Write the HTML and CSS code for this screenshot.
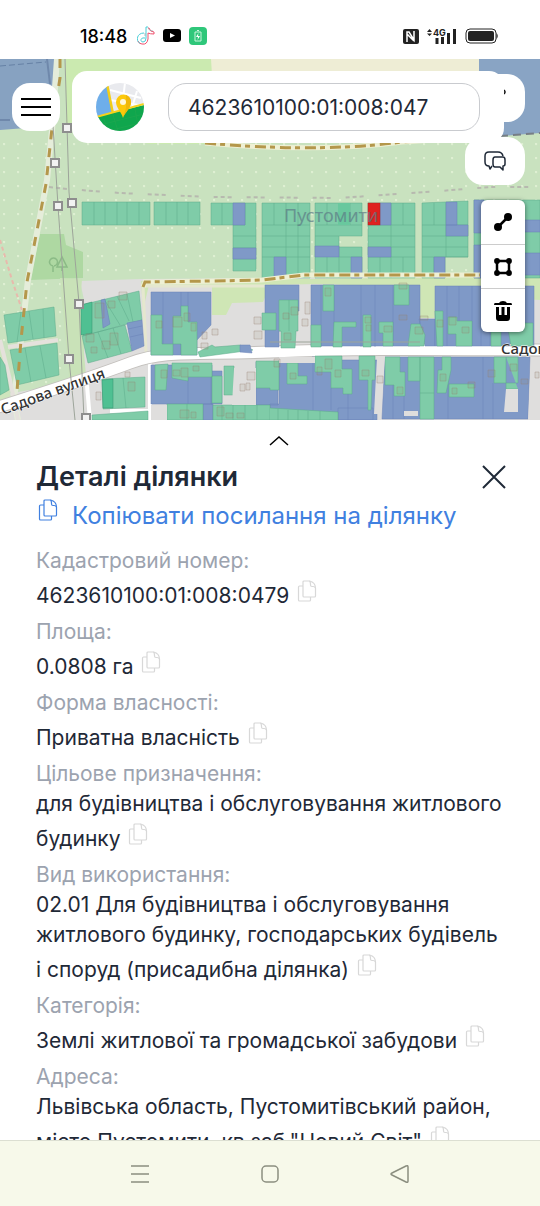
FILE: index.html
```
<!DOCTYPE html>
<html lang="uk">
<head>
    <meta charset="UTF-8">
    <meta name="viewport" content="width=device-width, initial-scale=1.0">
    <title>Деталі ділянки</title>
    <link rel="stylesheet" href="styles.css">
</head>
<body>
    <svg class="sprite" aria-hidden="true">
        <symbol id="copy" viewBox="0 0 24 24">
            <path d="M8 7H4.5Q3.500 7 3.500 8V21Q3.500 22 4.500 22H14.500Q15.500 22 15.500 21V18"/>
            <path d="M9 2H14.500Q20.500 3.500 20.500 9V17Q20.500 18 19.500 18H9Q8 18 8 17V3Q8 2 9 2Z"/>
            <path d="M14.500 2Q15.500 3 15.500 5V6Q15.500 7.500 17 7.500H18Q20 7.500 20.500 9"/>
        </symbol>
    </svg>

    <header class="status-bar">
        <div class="status-left">
            <span class="clock">18:48</span>
            <svg width="18" height="20" viewBox="0 0 18 20" fill="none">
                <path d="M11 2H12Q13 6 17 6V8Q13 8 11 7V13Q10 19 5 18Q2 18 1 15" stroke="#f0506e"/>
                <path d="M7 7C-1 7-1 16 3 17M8 12C3 11 3 16 6 16Q9 16 9 12V1H11" stroke="#48cdd6"/>
                <path d="M8 7V10M11 2Q12 5 16 5" stroke="#9aa5aa" stroke-width=".7"/>
            </svg>
            <svg width="18" height="14" viewBox="0 0 18 14"><rect width="18" height="13" rx="3"/><path d="M7 4L12 6.500L7 9Z" fill="#fff"/></svg>
            <svg width="18" height="18" viewBox="0 0 18 18"><rect width="18" height="18" rx="4" fill="#2fc77a"/><path d="M6 5H12V14H6ZM8 3.500H10" fill="none" stroke="#c9f5dc"/><path d="M9.500 6L7 10H9L8.500 13L11 9H9Z" fill="#fff"/></svg>
        </div>
        <div class="status-right">
            <svg width="16" height="15" viewBox="0 0 16 15"><rect width="16" height="15" rx="2" fill="#222"/><path d="M4 13V3L6 3L11 11V2M4 5L11 12" fill="none" stroke="#fff" stroke-width="1.5"/></svg>
            <svg width="30" height="16" viewBox="0 0 30 16" fill="#222">
                <path d="M0 4L2.500 1L5 4ZM0 5.500H5L2.500 8ZM8.500 10H11.500V16H8.500ZM14 9H17V16H14ZM20 5H23V16H20ZM26 1H29V16H26Z"/>
                <text class="network" x="6" y="8">4G</text>
            </svg>
            <svg width="33" height="16" viewBox="0 0 33 16"><rect x="1" y="1" width="30" height="14" rx="4" fill="none" stroke="#222"/><rect x="3" y="3" width="26" height="10" rx="2" fill="#222"/><path d="M31.500 5Q34 8 31.500 11Z" fill="#222"/></svg>
        </div>
    </header>

    <main class="app">
        <section class="map">
            <svg class="map-canvas" viewBox="0 59 540 361" role="img" aria-label="Кадастрова карта">
                <defs>
                    <pattern id="dots" x="3" y="143" width="14" height="14" patternUnits="userSpaceOnUse"><circle cx="1" cy="1" r="1.200" fill="#dff0d3"/></pattern>
                </defs>

                <!-- land use -->
                <rect y="59" width="540" height="361" fill="#c9e2bf"/>
                <path d="M66 59H212L216 100V144H150L66 130Z" fill="#cbeab0"/>
                <path d="M211 59H480V136L400 143H216Z" fill="#eeedd5"/>
                <path d="M479 59H540V133L500 136L479 140Z" fill="#89a4c4"/>
                <path d="M0 59H58L52 126L0 130Z" fill="#87a2c1"/>
                <path d="M0 66L46 62" fill="none" stroke="#6681a5" stroke-dasharray="6 3"/>
                <path d="M47 59L50 84M0 120H10" fill="none" stroke="#6f88ab" stroke-width="2"/>
                <rect y="132" width="540" height="285" fill="url(#dots)"/>
                <path d="M40 234H64L66 245L83 252V278L30 280Z" fill="#aed8a2"/>
                <path d="M53 272V266M53 266A4 4 0 1 1 54 266M62 271V267M57 267H67L62 257Z" fill="none" stroke="#8bbb86" stroke-width="1.500"/>
                <path d="M80 281L141 279L540 276V420H0V395L60 385L84 365V300Z" fill="#dfdedd"/>
                <path d="M141 281L540 276V300L435 294V318H420V287L315 284L270 285L263 302L232 303L226 315H212V285H149L143 310Z" fill="#cfe6b5"/>
                <path d="M60 278L70 387L86 376L80 305L82 279Z" fill="#c9e2b8"/>
                <path d="M0 340L12 404L0 408Z" fill="#cfe5bd"/>

                <!-- roads -->
                <path d="M57 59L52 130L47 180L28 280L14 400L18 420" fill="none" stroke="#e5edda" stroke-width="6"/>
                <path d="M143 286L146 352M143 286H270" fill="none" stroke="#e5e7cf" stroke-width="3"/>
                <path d="M86 374L90 420M150 360V420M110 411H149" fill="none" stroke="#fff" stroke-width="4"/>
                <path d="M0 340L10 380L18 420M8 347L58 340" fill="none" stroke="#e5e1dc" stroke-width="4"/>
                <path d="M-5 408C40 394 90 378 130 363C165 350 195 355 270 352S400 349 545 350" fill="none" stroke="#c3c0bd" stroke-width="13"/>
                <path d="M-5 408C40 394 90 378 130 363C165 350 195 355 270 352S400 349 545 350" fill="none" stroke="#fff" stroke-width="11"/>

                <!-- parcels, northern rows -->
                <g class="free">
                    <path d="M82 202H150V225H82ZM154 202H200V225H154ZM211 203H256V271H233V225H211Z"/>
                    <path d="M262 203H310V278H262ZM315 203H362V236H339V247H362V278H315ZM368 203H415V278H368ZM422 203L468 201V257H445V278H422ZM474 200H540V278H474Z"/>
                    <path d="M94 202V225M105 202V225M117 202V225M127 202V225M139 202V225M166 202V225M177 202V225M188 202V225M222 203V225M245 203V225H233M233 236H256M233 248H256M233 259H256"/>
                    <path d="M262 225H310M262 236H310M262 247H310M262 257H310M274 203V225M286 203V278M298 203V278M315 225H362M315 236H339M315 247H339V257H362M327 203V225M339 203V225M350 203V225M327 257V278M339 257V278"/>
                    <path d="M368 225H415M368 236H415M368 247H415M368 257H415M391 203V278M403 203V225M380 257V278M403 257V278M422 225H468M422 236H468M422 247H468M422 257H468M434 203V225M446 203V257M434 257V278"/>
                </g>
                <g class="owned">
                    <path d="M233 203H245V225H233ZM233 248H256V259H233ZM274 257H286V278H274ZM315 246H339V257H315ZM351 257H362V278H351ZM380 203H391V225H380ZM368 247H391V257H368ZM446 202H457V225H446ZM446 225H468V236H446ZM434 257H445V278H434Z"/>
                    <path d="M474 200H484V233H474ZM474 245H484V278H474ZM520 220H540V232H520ZM520 253H540V275H520Z"/>
                </g>
                <rect x="338" y="203" width="12" height="22" fill="#69c89e"/>
                <rect x="368" y="203" width="12" height="22" fill="#df211f" stroke="#a62a24" stroke-width=".5"/>

                <!-- parcels, west side -->
                <g class="free">
                    <path d="M4 315L54 307L56 336L8 343ZM10 350L57 343L59 375L17 385ZM0 357L5 365L9 390L0 395Z"/>
                    <path d="M21 312L17 342M29 311L33 339M43 309L44 338M25 348L31 382M40 346L46 378"/>
                    <path d="M81 305L139 291L142 320L83 336ZM82 336L125 325L132 351L88 363ZM104 299L120 325M117 296L129 321M127 294L133 322M98 332L108 358M113 328L121 354"/>
                    <path d="M102 379L145 377V407L103 409ZM123 378L126 408M92 415L148 411V420H92Z"/>
                </g>
                <path class="bright" d="M81 305L92 302V333L81 335ZM102 380L113 379V408H103Z"/>
                <path class="owned" d="M101 300L105 299L110 324L103 328ZM127 323L142 320L144 346L132 351ZM128 329L142 326M130 337L143 334"/>

                <!-- parcels along the street, north side -->
                <g class="owned">
                    <path d="M151 292H211V325L197 340V355H151ZM163 292V354M181 292V355M188 292V320"/>
                    <path d="M265 285H299V311H296V331H279V347H265ZM311 285H420V346H311ZM321 285V347M334 285V347M361 285V347M375 285V347M393 285V346M419 319H435V346H425Z"/>
                    <path d="M435 286H534V346H435ZM447 286V346M459 286V346M472 286V346M481 286V346M490 331V346"/>
                </g>
                <g class="free">
                    <path d="M151 315H162V344H173V355H151ZM173 316H181V306H188V322H197V355H181V344H173ZM198 352L212 345L215 347L240 345L253 350L200 357Z"/>
                    <path d="M262 313H276V330H262ZM279 300H298V331H296L295 348H281V331H279ZM289 300V331M323 285H334V311H323ZM311 325H321V347H311ZM334 322H356V327H342V347H333ZM363 315H371V347H363ZM379 322H393V346H383V333H379ZM394 285H409V305H394ZM411 324H420L425 335L424 346H408Z"/>
                    <path d="M435 311H443V346H437ZM448 317H457V321H472V346H456V334H448ZM491 332H501V346H491ZM507 323H533V346H511Z"/>
                </g>
                <path class="owned" d="M240 345H250L252 353L240 352Z"/>

                <!-- parcels along the street, south side -->
                <g class="owned">
                    <path d="M151 365H212V404H151ZM188 378V404M211 371H222V404H211ZM256 362H278V405H256ZM279 360H377V420H270V404H279ZM385 357H530L528 419H382ZM203 404H213V420H203ZM338 408H373V420H338Z"/>
                    <path d="M313 356V410M331 388V410M348 394V420M393 385V419M404 383V419M448 357V419M483 357V419M493 383V419"/>
                </g>
                <g class="free">
                    <path d="M155 365L168 364L166 390H155ZM172 363H212V377H188V381L172 378ZM212 376H222V403H212ZM224 366H234V395H224ZM167 404H203V420H167ZM213 405H270V420H213ZM187 404V420M222 405V420M233 405V420M245 405V420M257 405V420"/>
                    <path d="M256 361H279V390H270V388H256ZM287 363H298V376H307V384H287ZM315 356H342V369H352V394H343V388H331V372H315ZM359 356H375V380H372L371 410H368V380H359ZM385 357H400V372H405V396H394V385H385ZM408 357H420V381H408ZM420 357H434V419H420ZM438 370H442V357H451V370L446 393H437ZM449 384H474V397H449ZM494 357H518V383H494ZM506 357V389H518M270 408L338 412V420H270M420 393H434M278 409V420M288 410V420M298 410V420M308 411V420M320 411V420"/>
                </g>
                <path d="M377 357H385L381 414H374ZM506 389H518V412H504ZM151 405H167V420H151ZM234 368H256V405H232ZM404 411H418V416H404ZM531 357H540V420H528ZM279 357H315V363H279Z" fill="#dfdedd"/>

                <!-- buildings -->
                <g class="buildings">
                    <path d="M108 301h7v7h-7zM119 292h8v8h-8zM95 303h9v15h-9zM86 334h8v8h-8zM102 341h8v8h-8zM110 333h8v12h-8zM91 347h6v6h-6zM156 321h6v7h-6zM173 317h9v10h-9zM184 313h6v8h-6zM191 323h5v8h-5zM202 332h5v7h-5zM212 329h6v6h-6zM201 343h7v6h-7zM254 317h7v7h-7zM254 331h8v8h-8z"/>
                    <path d="M128 382h7v9h-7zM96 392h5v8h-5zM125 372h5v5h-5zM161 370h6v8h-6zM173 370h7v6h-7zM181 368h7v9h-7zM193 366h6v5h-6zM247 372h8v8h-8zM240 384h5v7h-5zM246 383h4v7h-4zM180 410h9v8h-9zM191 412h5v6h-5zM217 407h7v9h-7zM226 413h7v5h-7zM237 413h7v5h-7z"/>
                    <path d="M283 313h6v6h-6zM291 307h7v8h-7zM305 302h5v12h-5zM302 319h6v7h-6zM284 333h7v7h-7zM325 288h6v8h-6zM365 317h6v6h-6zM366 325h5v6h-5zM384 326h8v6h-8zM399 283h8v6h-8zM399 315h8v5h-8zM415 327h8v7h-8zM420 316h8v4h-8zM437 320h6v7h-6zM449 317h7v8h-7zM462 327h7v6h-7z"/>
                    <path d="M290 373h6v6h-6zM274 359h6v8h-6zM317 367h5v8h-5zM325 359h7v10h-7zM335 370h6v7h-6zM362 370h7v6h-7zM377 376h6v7h-6zM397 387h6v7h-6zM440 374h6v7h-6zM452 388h5v6h-5zM468 382h7v6h-7zM488 370h7v7h-7zM510 364h7v7h-7zM521 379h7v5h-7zM535 372h4v6h-4z"/>
                </g>

                <!-- paths and power lines -->
                <g class="track-edge">
                    <path d="M143 287L145 282Q220 281 262 280L304 275H480"/>
                    <path d="M205 143Q320 153 402 142L480 137"/>
                </g>
                <path class="track-steep" d="M60 59V78L52 128L46 184L27 282L21 340L17 391"/>
                <g class="track">
                    <path d="M143 287L145 282Q220 281 262 280L304 275H480"/>
                    <path d="M205 143Q320 153 402 142L480 137"/>
                </g>
                <path d="M49 187L67 189L120 193L210 197L340 198L440 191L490 187H540" class="footway"/>
                <path d="M0 240L12 280L22 310" class="trail"/>
                <path d="M65 59L69 192L79 303L84 420M53 126L58 206L69 359L75 420M270 342H420" class="wire"/>
                <path d="M500 136L540 133" fill="none" stroke="#777e86" stroke-width="2" stroke-dasharray="8 5"/>
                <path class="pylons" d="M63 124h8v8h-8zM51 159h8v8h-8zM54 202h8v8h-8zM68 199h8v8h-8zM75 300h8v8h-8zM65 355h8v8h-8zM82 414h8v8h-8z"/>

                <!-- place names -->
                <text class="place" x="284" y="222">Пустомити</text>
                <text class="street" transform="translate(3 415) rotate(-20)">Садова вулиця</text>
                <text class="street" x="501" y="354">Садова</text>
            </svg>

            <button class="map-button menu-button" aria-label="Меню">
                <svg width="30" height="20" viewBox="0 0 30 20"><path d="M0 2H30M0 10H30M0 18H30" stroke="#000" stroke-width="2"/></svg>
            </button>
            <button class="map-button user-button" aria-label="Профіль">
                <svg width="12" height="10" viewBox="0 0 12 10"><path d="M9 1Q11 3 9 5" fill="none" stroke="#111" stroke-width="1.500"/></svg>
            </button>
            <form class="search-bar">
                <svg class="logo" viewBox="0 0 48 48">
                    <clipPath id="round"><circle cx="24" cy="24" r="24"/></clipPath>
                    <g clip-path="url(#round)">
                        <rect width="48" height="48" fill="#e9eaee"/>
                        <path d="M14 7L45 15M14 17L48 23M29 0L26 24M41 8L35 28" stroke="#fff" stroke-width="2"/>
                        <path d="M0 0H11L17 31L0 36Z" fill="#6eaeea"/>
                        <path d="M11 1L17 31" stroke="#f2cd18" stroke-width="2.500"/>
                        <path d="M0 34L48 22V48H0Z" fill="#0fa64d"/>
                        <path d="M0 34L48 21" stroke="#f5d21c" stroke-width="2"/>
                        <path d="M8 36L12 48M17 32L22 48M39 26L43 48M0 43L48 31M12 48L48 39" stroke="#26a851" stroke-width=".5"/>
                        <path d="M27 35C25 28 20 25 20 19A7 7 0 0 1 35 19C35 25 29 29 27 35Z" fill="#fdc90b"/>
                        <path d="M27 35C29 29 35 25 35 19Q35 14 30 12V25Z" fill="#f0b80b"/>
                        <circle cx="27" cy="19" r="3" fill="#fff7db"/>
                    </g>
                </svg>
                <input type="text" class="search-input" value="4623610100:01:008:047" aria-label="Кадастровий номер">
            </form>
            <button class="map-button chat-button" aria-label="Чат">
                <svg width="24" height="24" viewBox="0 0 24 24" fill="none" stroke="#1f2937" stroke-width="1.500" stroke-linejoin="round">
                    <path d="M9 17L7 20L6 17Q2 17 2 13V7Q2 3 6 3H15Q19 3 20 7"/>
                    <path d="M12 8H20Q22 8 22 11V15Q22 17 20 17V21L17 18H12Q10 18 10 15V11Q10 8 12 8Z"/>
                </svg>
            </button>
            <div class="draw-tools">
                <button aria-label="Лінія">
                    <svg width="20" height="20" viewBox="0 0 20 20"><path d="M4 16L16 4" stroke="#000" stroke-width="2.500"/><circle cx="5" cy="15" r="4"/><circle cx="15" cy="5" r="4"/></svg>
                </button>
                <button aria-label="Полігон">
                    <svg width="20" height="20" viewBox="0 0 20 20"><rect x="4" y="4" width="12" height="12" fill="none" stroke="#000" stroke-width="2.500"/><circle cx="4" cy="4" r="2.900"/><circle cx="16" cy="4" r="2.900"/><circle cx="4" cy="16" r="2.900"/><circle cx="16" cy="16" r="2.900"/></svg>
                </button>
                <button aria-label="Видалити">
                    <svg width="20" height="22" viewBox="0 0 20 22"><path d="M2 3H6Q7 1 10 1Q13 1 14 3H18Q19 3 19 5H1Q1 3 2 3Z"/><path d="M3 7H6V15H8.500V7H11.500V15H14V7H17V18Q17 21 14 21H6Q3 21 3 18Z"/></svg>
                </button>
            </div>
        </section>

        <section class="details">
            <button class="expand-button" aria-label="Розгорнути">
                <svg width="20" height="11" viewBox="0 0 20 11"><path d="M1 10L10 2L19 10" fill="none" stroke="#000" stroke-width="1.500"/></svg>
            </button>
            <div class="details-header">
                <h1>Деталі ділянки</h1>
                <button class="close-button" aria-label="Закрити">
                    <svg width="24" height="24" viewBox="0 0 24 24"><path d="M1 1L23 23M23 1L1 23" stroke="#1f2937" stroke-width="2"/></svg>
                </button>
            </div>
            <a href="#" class="copy-link">
                <svg class="copy-icon"><use href="#copy"/></svg>
                <span>Копіювати посилання на ділянку</span>
            </a>
            <dl class="fields">
                <dt>Кадастровий номер:</dt>
                <dd>4623610100:01:008:0479 <button class="copy-button" aria-label="Копіювати"><svg class="copy-icon"><use href="#copy"/></svg></button></dd>
                <dt>Площа:</dt>
                <dd>0.0808 га <button class="copy-button" aria-label="Копіювати"><svg class="copy-icon"><use href="#copy"/></svg></button></dd>
                <dt>Форма власності:</dt>
                <dd>Приватна власність <button class="copy-button" aria-label="Копіювати"><svg class="copy-icon"><use href="#copy"/></svg></button></dd>
                <dt>Цільове призначення:</dt>
                <dd>для будівництва і обслуговування житлового будинку <button class="copy-button" aria-label="Копіювати"><svg class="copy-icon"><use href="#copy"/></svg></button></dd>
                <dt>Вид використання:</dt>
                <dd>02.01 Для будівництва і обслуговування житлового будинку, господарських будівель і&nbsp;споруд (присадибна ділянка) <button class="copy-button" aria-label="Копіювати"><svg class="copy-icon"><use href="#copy"/></svg></button></dd>
                <dt>Категорія:</dt>
                <dd>Землі житлової та громадської забудови <button class="copy-button" aria-label="Копіювати"><svg class="copy-icon"><use href="#copy"/></svg></button></dd>
                <dt>Адреса:</dt>
                <dd>Львівська область, Пустомитівський район, місто Пустомити, кв.заб."Новий Світ" <button class="copy-button" aria-label="Копіювати"><svg class="copy-icon"><use href="#copy"/></svg></button></dd>
            </dl>
        </section>
    </main>

    <nav class="system-nav">
        <button aria-label="Останні програми"><svg width="20" height="20" viewBox="0 0 20 20"><path d="M1 2H19M1 10H19M1 18H19"/></svg></button>
        <button aria-label="Головний екран"><svg width="20" height="20" viewBox="0 0 20 20"><rect x="2" y="2" width="16" height="16" rx="4"/></svg></button>
        <button aria-label="Назад"><svg width="20" height="20" viewBox="0 0 20 20"><path d="M2 9L16 2Q18 1 18 3V17Q18 19 16 18L2 11Q0 10 2 9Z"/></svg></button>
    </nav>
</body>
</html>
```

FILE: styles.css
```
* {
    box-sizing: border-box;
}
body {
    font-family: Inter, "Noto Sans", sans-serif;
    margin: 0;
    height: 100vh;
    display: flex;
    flex-direction: column;
    overflow: hidden;
    background-color: #fff;
    color: #1f2937;
}
button {
    border: none;
    padding: 0;
    background: none;
    font: inherit;
    color: inherit;
    cursor: pointer;
}
svg {
    display: block;
}
.sprite {
    position: absolute;
    width: 0;
    height: 0;
}

/* status bar */
.status-bar {
    flex: none;
    display: flex;
    justify-content: space-between;
    padding: 24px 42px 11px 80px;
}
.status-left,
.status-right {
    display: flex;
    align-items: center;
    gap: 8px;
    height: 24px;
}
.clock {
    font-size: 18px;
    font-weight: 500;
    color: #000;
    margin-right: 2px;
}
.network {
    font-size: 9px;
    font-weight: 700;
}

.app {
    flex: 1;
    min-height: 0;
    display: flex;
    flex-direction: column;
}

/* map */
.map {
    position: relative;
    flex: none;
}
.map-canvas {
    width: 100%;
    height: auto;
}
.free {
    fill: #7fcca8;
    stroke: #5dab8b;
    stroke-width: 0.5;
}
.owned {
    fill: #7f99c7;
    stroke: #6880b6;
    stroke-width: 0.5;
}
.bright {
    fill: #4fc092;
    stroke: #36906f;
    stroke-width: 0.5;
}
.buildings {
    fill: rgba(150, 130, 110, 0.12);
    stroke: rgba(150, 125, 110, 0.35);
}
.track,
.track-steep,
.track-edge {
    fill: none;
    stroke: #b4974b;
    stroke-width: 3;
    stroke-dasharray: 11 4 5 5;
}
.track-steep {
    stroke-dasharray: 9 9;
}
.track-edge {
    stroke: #eef0d4;
    stroke-width: 5;
    stroke-dasharray: none;
}
.footway {
    fill: none;
    stroke: #b7b9af;
    stroke-width: 2;
    stroke-dasharray: 4 3 4 3 4 15;
}
.trail {
    fill: none;
    stroke: #e8b9ac;
    stroke-width: 2;
    stroke-dasharray: 4 3;
}
.wire {
    fill: none;
    stroke: #9da49a;
    stroke-width: 1;
}
.pylons {
    fill: #f2f2f2;
    stroke: #8e8e8e;
    stroke-width: 2;
}
.place {
    font-family: "Noto Sans", sans-serif;
    font-size: 18px;
    fill: #5d7c86;
    opacity: 0.7;
}
.street {
    font-family: "Noto Sans", sans-serif;
    font-size: 15px;
    font-weight: 500;
    fill: #333;
    stroke: #fff;
    stroke-width: 1;
    paint-order: stroke;
}
.map-button {
    position: absolute;
    display: flex;
    align-items: center;
    justify-content: center;
    height: 48px;
    background-color: #fff;
    border-radius: 18px;
}
.menu-button {
    top: 24px;
    left: 12px;
    width: 48px;
}
/* sits partly under the search bar */
.user-button {
    top: 15px;
    right: 15px;
    width: 48px;
    padding-bottom: 8px;
}
.search-bar {
    position: absolute;
    top: 12px;
    left: 72px;
    right: 36px;
    display: flex;
    align-items: center;
    gap: 24px;
    padding: 12px 24px;
    background-color: #fff;
    border-radius: 15px;
}
.logo {
    flex: none;
    width: 48px;
    height: 48px;
}
.search-input {
    flex: 1;
    min-width: 0;
    height: 48px;
    padding: 0 19px;
    border: 1px solid #c9cbcf;
    border-radius: 18px;
    background-color: #fff;
    font-family: inherit;
    font-size: 21px;
    color: #1f2937;
}
.chat-button {
    top: 78px;
    right: 15px;
    width: 60px;
}
.draw-tools {
    position: absolute;
    top: 141px;
    right: 15px;
    width: 44px;
    background-color: #fff;
    border-radius: 6px;
    box-shadow: 0 1px 5px rgba(0, 0, 0, 0.5);
}
.draw-tools button {
    display: flex;
    align-items: center;
    justify-content: center;
    width: 100%;
    height: 44px;
}
.draw-tools button + button {
    border-top: 1px solid #ccc;
}

/* parcel details */
.details {
    flex: 1;
    min-height: 0;
    overflow: hidden;
    padding: 0 32px 0 36px;
}
.expand-button {
    display: flex;
    align-items: center;
    justify-content: center;
    width: 100%;
    height: 36px;
    padding: 4px 0 0 14px;
}
.details-header {
    display: flex;
    align-items: center;
    justify-content: space-between;
}
h1 {
    margin: 0;
    font-size: 27px;
    font-weight: 600;
    line-height: 42px;
}
.close-button {
    width: 26px;
    height: 24px;
}
.copy-icon {
    width: 24px;
    height: 24px;
    fill: none;
    stroke: currentColor;
    stroke-width: 1.2;
}
.copy-link {
    display: flex;
    align-items: flex-start;
    gap: 12px;
    font-size: 24px;
    line-height: 36px;
    color: #4080e0;
    text-decoration: none;
}
.fields {
    margin: 12px 0 0;
    font-size: 21px;
    line-height: 30px;
}
.fields dt {
    color: #9ca3af;
}
.fields dd {
    margin: 0 0 6px;
}
.copy-button {
    margin-top: 3px;
    vertical-align: baseline;
    color: #d8d8d8;
}

/* system navigation */
.system-nav {
    flex: none;
    display: flex;
    justify-content: center;
    height: 66px;
    background-color: #f7f9ea;
    border-top: 1px solid #dcdfd2;
}
.system-nav button {
    display: flex;
    align-items: center;
    justify-content: center;
    width: 24%;
}
.system-nav svg {
    fill: none;
    stroke: #8c8f80;
    stroke-width: 1.5;
}
```
